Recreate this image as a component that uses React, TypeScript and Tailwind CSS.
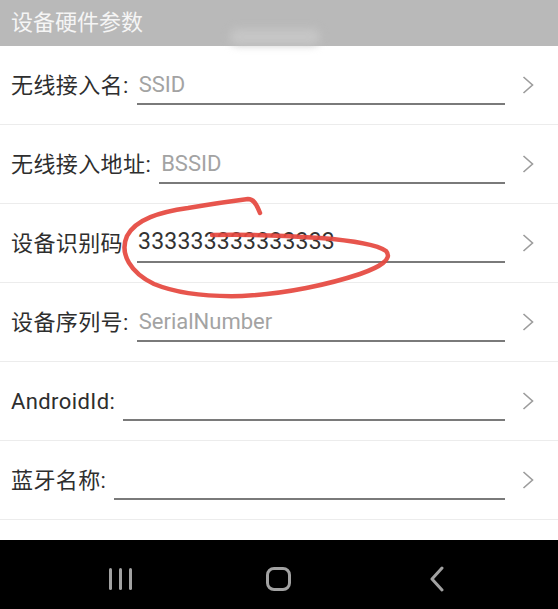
import React from 'react';

interface FieldRow {
  label: string;
  value: string;
  placeholder: string;
  wide?: boolean;
}

const rows: FieldRow[] = [
  { label: '无线接入名:', value: '', placeholder: 'SSID' },
  { label: '无线接入地址:', value: '', placeholder: 'BSSID' },
  { label: '设备识别码', value: '333333333333333', placeholder: '', wide: true },
  { label: '设备序列号:', value: '', placeholder: 'SerialNumber' },
  { label: 'AndroidId:', value: '', placeholder: '' },
  { label: '蓝牙名称:', value: '', placeholder: '' },
];

const font = { fontFamily: 'Roboto, "Noto Sans CJK SC", sans-serif' };

function Chevron() {
  return (
    <svg width="12" height="18" viewBox="0 0 12 18" className="ml-[17px] shrink-0">
      <polyline points="1.5,1 10.5,9 1.5,17" fill="none" stroke="#9c9c9c" strokeWidth="1.6" />
    </svg>
  );
}

export default function App() {
  return (
    <div className="relative w-[558px] h-[609px] bg-white overflow-hidden" style={font}>
      {/* Title bar */}
      <div className="relative h-[46px] bg-[#b9b9b9] flex items-center pl-[11px]">
        <span className="text-[22px] text-[#f5f5f5] leading-none">设备硬件参数</span>
        <div className="absolute left-[230px] top-[29px] w-[90px] h-[16px] rounded-full bg-[#c6c6c6] blur-[4px]" />
      </div>

      {/* Fields */}
      {rows.map((row) => (
        <div
          key={row.label}
          className="flex items-center h-[79px] border-b border-[#ececec] pl-[11px] pr-[24px]"
        >
          <span className="text-[22px] text-[#2e2e2e] whitespace-nowrap tracking-[0.4px]">{row.label}</span>
          <div
            className={`flex-1 h-[40px] flex items-center border-b-2 border-[#7a7a7a] ${row.wide ? 'ml-[14px]' : 'ml-[8px]'}`}
          >
            {row.value ? (
              <span className="pl-[1px] text-[23px] text-[#333333] tracking-[0.2px]">{row.value}</span>
            ) : (
              <span className="pl-[2px] text-[22px] text-[#a3a3a3]">{row.placeholder}</span>
            )}
          </div>
          <Chevron />
        </div>
      ))}

      <div className="h-[20px] bg-white" />

      {/* Android navigation bar */}
      <div className="h-[69px] bg-black flex items-center pt-[9px] pl-[109px]">
        <div className="flex gap-[7px]">
          <div className="w-[3px] h-[22px] rounded-sm bg-[#a2a2a2]" />
          <div className="w-[3px] h-[22px] rounded-sm bg-[#a2a2a2]" />
          <div className="w-[3px] h-[22px] rounded-sm bg-[#a2a2a2]" />
        </div>
        <div className="ml-[134px] w-[25px] h-[24px] rounded-[8px] border-[3px] border-[#a2a2a2]" />
        <svg width="14" height="26" viewBox="0 0 14 26" className="ml-[139px]">
          <polyline points="12,2 2,13 12,24" fill="none" stroke="#a2a2a2" strokeWidth="3" strokeLinecap="round" strokeLinejoin="round" />
        </svg>
      </div>

      {/* Red hand-drawn annotation */}
      <svg
        className="absolute left-0 top-0 pointer-events-none"
        width="558"
        height="609"
        viewBox="0 0 558 609"
      >
        <path
          d="M260,213 C257,205 254,199 248,199 C232,201 212,204 188,208 C160,212 136,219 127,236 C119,254 131,273 154,284 C176,293 204,297 242,296 C286,294 330,284 360,274 C380,267 393,259 386,251 C376,244 346,240 320,238 C290,236 250,234 212,235"
          fill="none"
          stroke="#e5473e"
          strokeWidth="4.5"
          strokeLinecap="round"
          strokeLinejoin="round"
          opacity="0.92"
        />
      </svg>
    </div>
  );
}
